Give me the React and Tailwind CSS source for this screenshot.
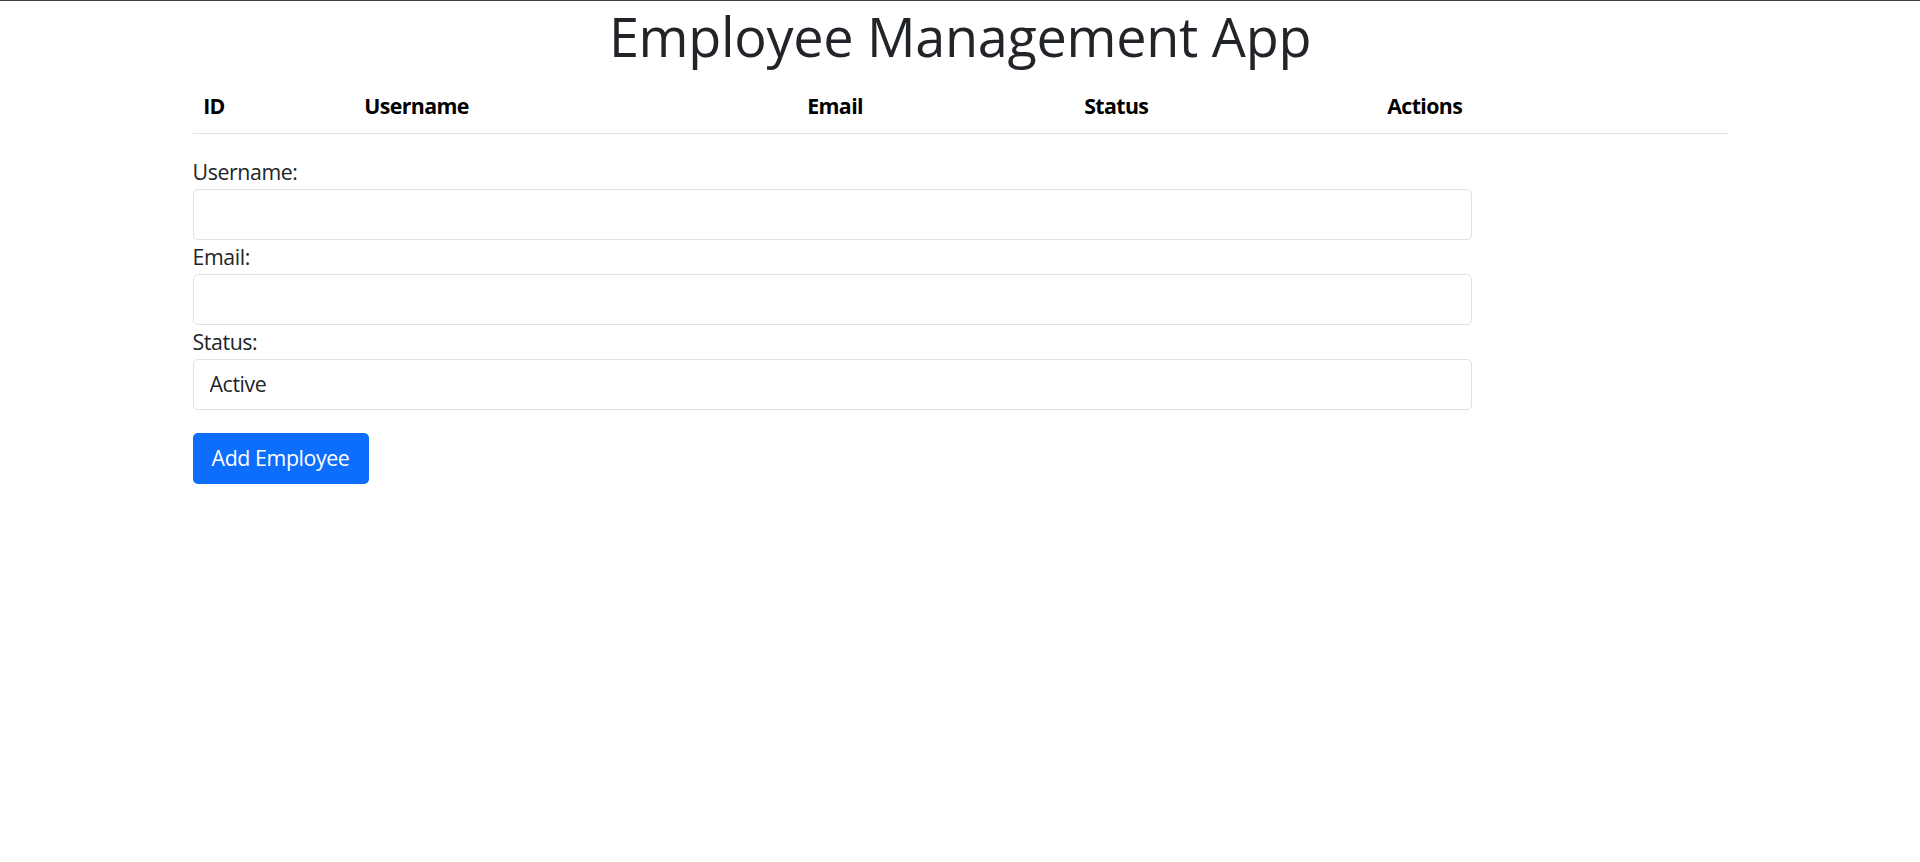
export default function App() {
  const cols = [
    { label: "ID", w: "w-[161px]" },
    { label: "Username", w: "w-[443px]" },
    { label: "Email", w: "w-[277px]" },
    { label: "Status", w: "w-[303px]" },
    { label: "Actions", w: "w-[351px]" },
  ];

  return (
    <div className="min-h-screen bg-white border-t border-[#3f3f3f] font-['Open_Sans',sans-serif] text-[#212529]">
      <h1 className="mt-[3px] text-center text-[54px] leading-[64px] font-medium tracking-[-0.3px]">
        Employee Management App
      </h1>

      <div className="mx-auto w-[1535px] mt-[12px]">
        <table className="w-full table-fixed border-collapse">
          <thead>
            <tr className="border-b border-[#dee2e6]">
              {cols.map((c) => (
                <th
                  key={c.label}
                  className={`${c.w} h-[53px] px-[10.67px] text-left text-[21.33px] leading-[32px] font-bold text-black tracking-[-0.6px]`}
                >
                  {c.label}
                </th>
              ))}
            </tr>
          </thead>
          <tbody></tbody>
        </table>

        <form className="w-[1279px] mt-[21px] tracking-[-0.4px]" onSubmit={(e) => e.preventDefault()}>
          <label className="block h-[34px] text-[21.33px] leading-[34px]">Username:</label>
          <input
            type="text"
            className="block w-full h-[51px] px-4 border border-[#dee2e6] rounded-[5px] text-[21.33px] outline-none"
          />
          <label className="block h-[34px] text-[21.33px] leading-[34px]">Email:</label>
          <input
            type="email"
            className="block w-full h-[51px] px-4 border border-[#dee2e6] rounded-[5px] text-[21.33px] outline-none"
          />
          <label className="block h-[34px] text-[21.33px] leading-[34px]">Status:</label>
          <select className="block w-full h-[51px] px-4 border border-[#dee2e6] rounded-[5px] text-[21.33px] bg-white appearance-none outline-none">
            <option>Active</option>
            <option>Inactive</option>
          </select>
          <button
            type="submit"
            className="mt-[23px] w-[176px] h-[51px] bg-[#0d6efd] text-white text-[21.33px] rounded-[5px]"
          >
            Add Employee
          </button>
        </form>
      </div>
    </div>
  );
}
